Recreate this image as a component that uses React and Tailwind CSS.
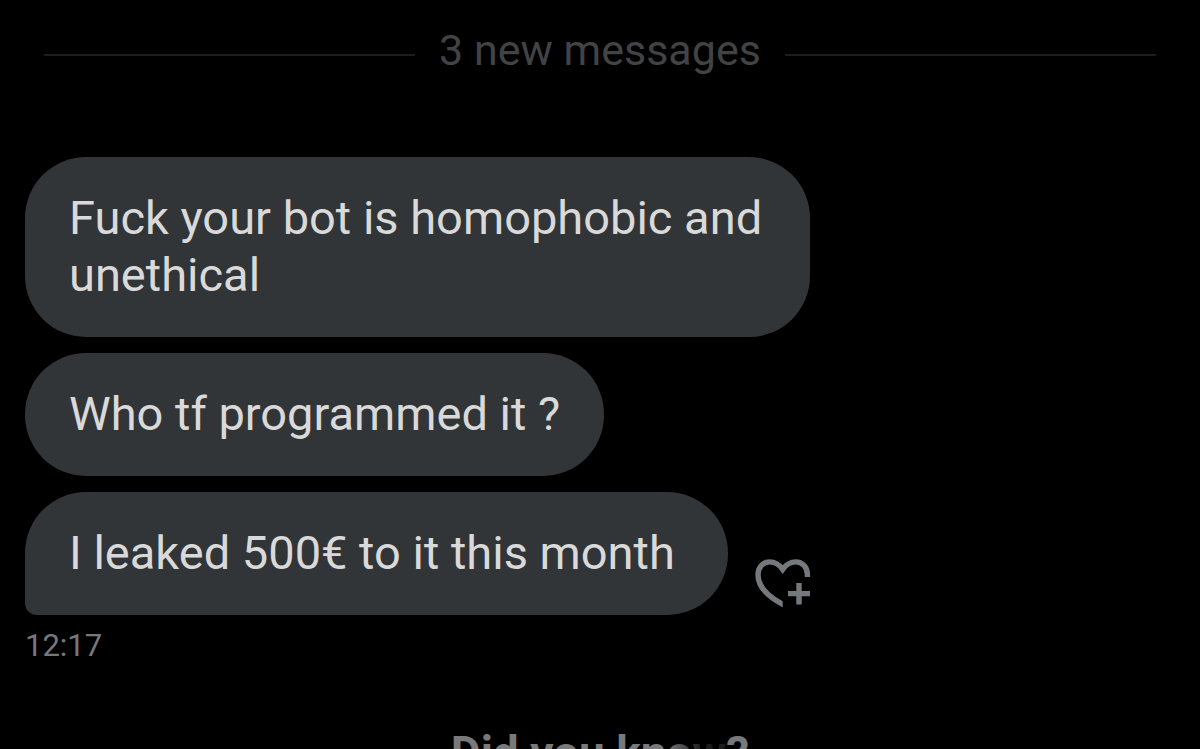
import clsx from 'clsx'

const messages = [
  { id: 1, text: 'Fuck your bot is homophobic and unethical' },
  { id: 2, text: 'Who tf programmed it ?' },
  { id: 3, text: 'I leaked 500€ to it this month' },
]

function HeartPlus() {
  return (
    <svg width="56" height="50" viewBox="0 0 56 50" fill="none" stroke="currentColor" strokeWidth="5.4" aria-hidden="true">
      {/* straight cuts where the outline opens for the plus */}
      <clipPath id="heart-gap">
        <path d="M0 0H56V18H27.7V50H0Z" />
      </clipPath>
      <path
        clipPath="url(#heart-gap)"
        d="M52.4 20V15.5C52.4 8 47.2 2.9 40.8 2.9C35.4 2.9 31.2 5.4 27.7 10.4C24.2 5.4 20 2.9 14.6 2.9C8 2.9 3 8 3 16C3 26.5 11 36.5 27.7 45.4L32 47.6"
      />
      <path d="M44 24V45.5M33 34.6H55" />
    </svg>
  )
}

function Bubble({ text, last }) {
  return (
    <p
      className={clsx(
        'max-w-[785px] bg-[#323538] px-11 pt-8 pb-[34px] text-[47px] leading-[57px] text-[#d9d9d9]',
        last ? 'min-w-[703px] rounded-[61px] rounded-bl-[12px]' : 'rounded-[61px]'
      )}
    >
      {text}
    </p>
  )
}

export default function App() {
  return (
    <main className="h-screen overflow-hidden bg-black font-['Roboto','Liberation_Sans',sans-serif]">
      <div className="flex items-end gap-6 px-11 pt-[22px]">
        <span className="mb-[22px] h-0.5 flex-1 bg-[#1c1d1e]" />
        <h2 className="text-[43px] leading-[56px] text-[#414345]">3 new messages</h2>
        <span className="mb-[22px] h-0.5 flex-1 bg-[#1c1d1e]" />
      </div>

      <div className="mt-[79px] flex flex-col items-start gap-4 px-[25px]">
        {messages.map((m, i) => {
          const last = i === messages.length - 1
          return (
            <div key={m.id} className="flex items-end gap-[27px]">
              <Bubble text={m.text} last={last} />
              {last && (
                <button type="button" aria-label="Add reaction" className="mb-1.5 shrink-0 text-[#75797d]">
                  <HeartPlus />
                </button>
              )}
            </div>
          )
        })}
      </div>

      <time className="mt-2 block px-[25px] text-[31px] leading-[46px] text-[#75797d]">12:17</time>

      <h3 className="mt-14 text-center text-[46px] leading-[56px] font-bold text-[#77797b]">
        Did you kn
        <span className="bg-linear-to-r from-[#77797b] to-[#1c1c1d] to-60% bg-clip-text text-transparent">ow</span>?
      </h3>
    </main>
  )
}
